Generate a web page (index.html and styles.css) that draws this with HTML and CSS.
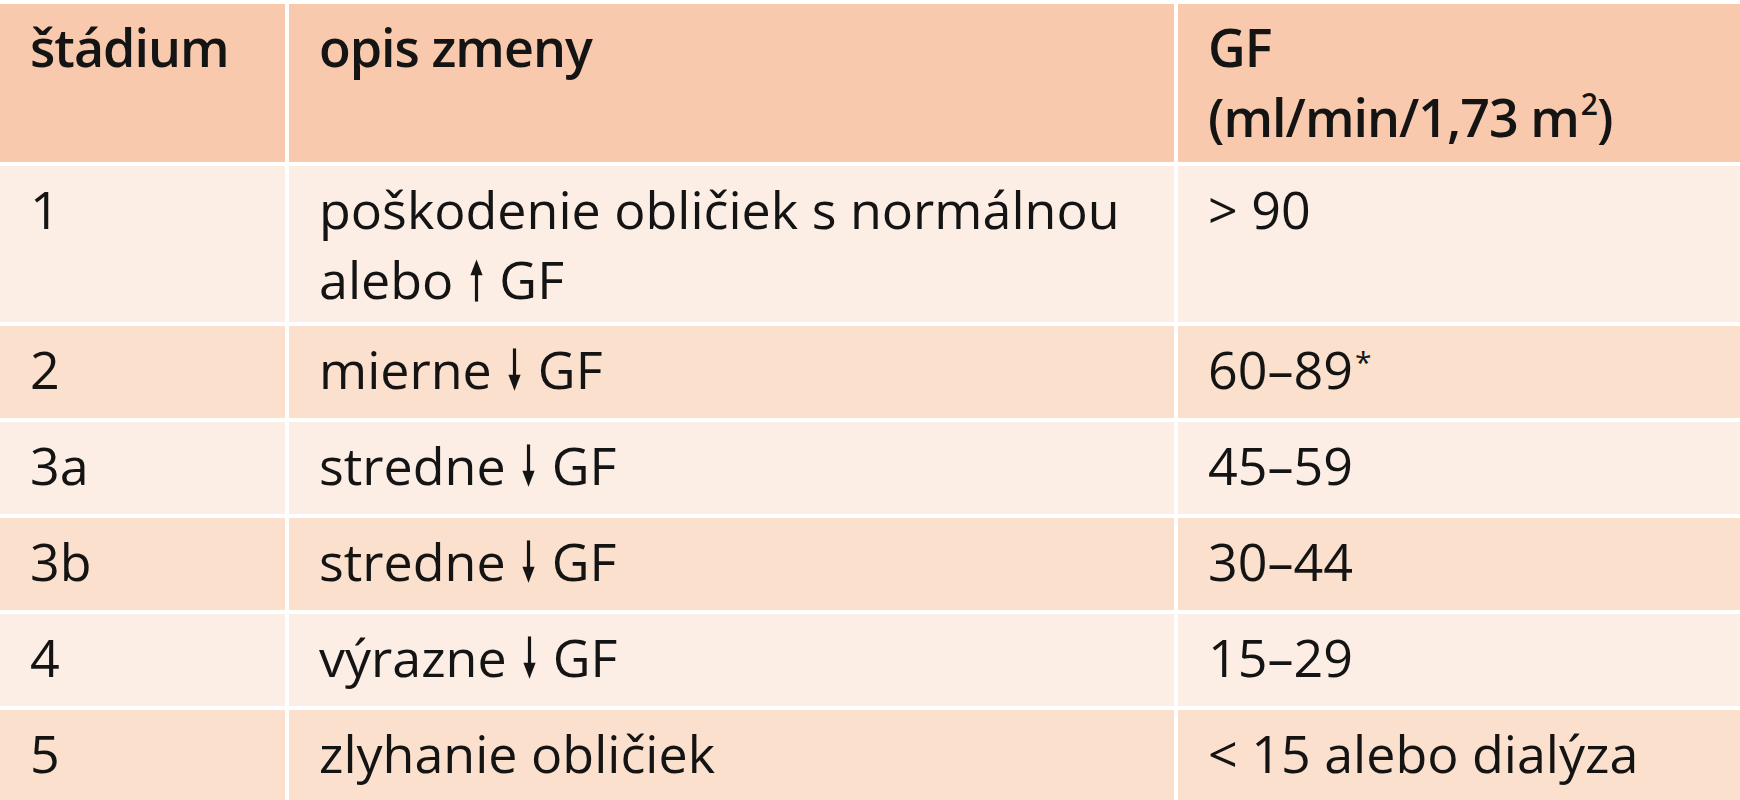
FILE: index.html
```html
<!DOCTYPE html>
<html lang="sk">
<head>
<meta charset="utf-8">
<title>Štádiá CKD</title>
<link rel="stylesheet" href="styles.css">
</head>
<body>
<div class="table">
  <div class="cell head">štádium</div>
  <div class="cell head">opis zmeny</div>
  <div class="cell head">GF<br>(ml/min/1,73 m<sup class="sup">2</sup>)</div>

  <div class="cell light">1</div>
  <div class="cell light">poškodenie obličiek s normálnou<br>alebo <svg class="arrow" viewBox="0 0 16 46"><rect x="6.3" y="12" width="3.4" height="34"/><polygon points="1.5,18 8,1 14.5,18"/></svg> GF</div>
  <div class="cell light">&gt; 90</div>

  <div class="cell mid">2</div>
  <div class="cell mid">mierne <svg class="arrow" viewBox="0 0 16 46"><rect x="6.3" y="0" width="3.4" height="34"/><polygon points="1.5,28 8,45 14.5,28"/></svg> GF</div>
  <div class="cell mid">60–89<span class="star">*</span></div>

  <div class="cell light">3a</div>
  <div class="cell light">stredne <svg class="arrow" viewBox="0 0 16 46"><rect x="6.3" y="0" width="3.4" height="34"/><polygon points="1.5,28 8,45 14.5,28"/></svg> GF</div>
  <div class="cell light">45–59</div>

  <div class="cell mid">3b</div>
  <div class="cell mid">stredne <svg class="arrow" viewBox="0 0 16 46"><rect x="6.3" y="0" width="3.4" height="34"/><polygon points="1.5,28 8,45 14.5,28"/></svg> GF</div>
  <div class="cell mid">30–44</div>

  <div class="cell light">4</div>
  <div class="cell light">výrazne <svg class="arrow" viewBox="0 0 16 46"><rect x="6.3" y="0" width="3.4" height="34"/><polygon points="1.5,28 8,45 14.5,28"/></svg> GF</div>
  <div class="cell light">15–29</div>

  <div class="cell mid">5</div>
  <div class="cell mid">zlyhanie obličiek</div>
  <div class="cell mid">&lt; 15 alebo dialýza</div>
</div>
</body>
</html>
```

FILE: styles.css
```css
html, body {
  margin: 0;
  padding: 0;
  background: #ffffff;
}

body {
  font-family: "Open Sans", "Noto Sans", "DejaVu Sans", sans-serif;
  color: #141414;
  overflow: hidden;
}

.table {
  display: grid;
  grid-template-columns: 285px 885px 1fr;
  grid-template-rows: 158px 156px 92px 92px 92px 92px 90px;
  gap: 4px;
  padding-top: 4px;
}

.cell {
  padding: 8px 30px 0 30px;
  font-size: 52px;
  line-height: 70px;
  white-space: nowrap;
}

.head {
  background: #f8c9ac;
  font-weight: 600;
  letter-spacing: -1px;
}

.light {
  background: #fdeee5;
}

.mid {
  background: #fbe0cd;
}

.arrow {
  width: 15px;
  height: 44px;
  fill: #141414;
  vertical-align: -3px;
  margin: 0 2px;
}

.sup {
  font-size: 30px;
  line-height: 0;
  position: relative;
  top: -22px;
  vertical-align: baseline;
  margin-left: 2px;
}

.star {
  font-size: 30px;
  line-height: 0;
  position: relative;
  top: -16px;
  margin-left: 2px;
}
```
